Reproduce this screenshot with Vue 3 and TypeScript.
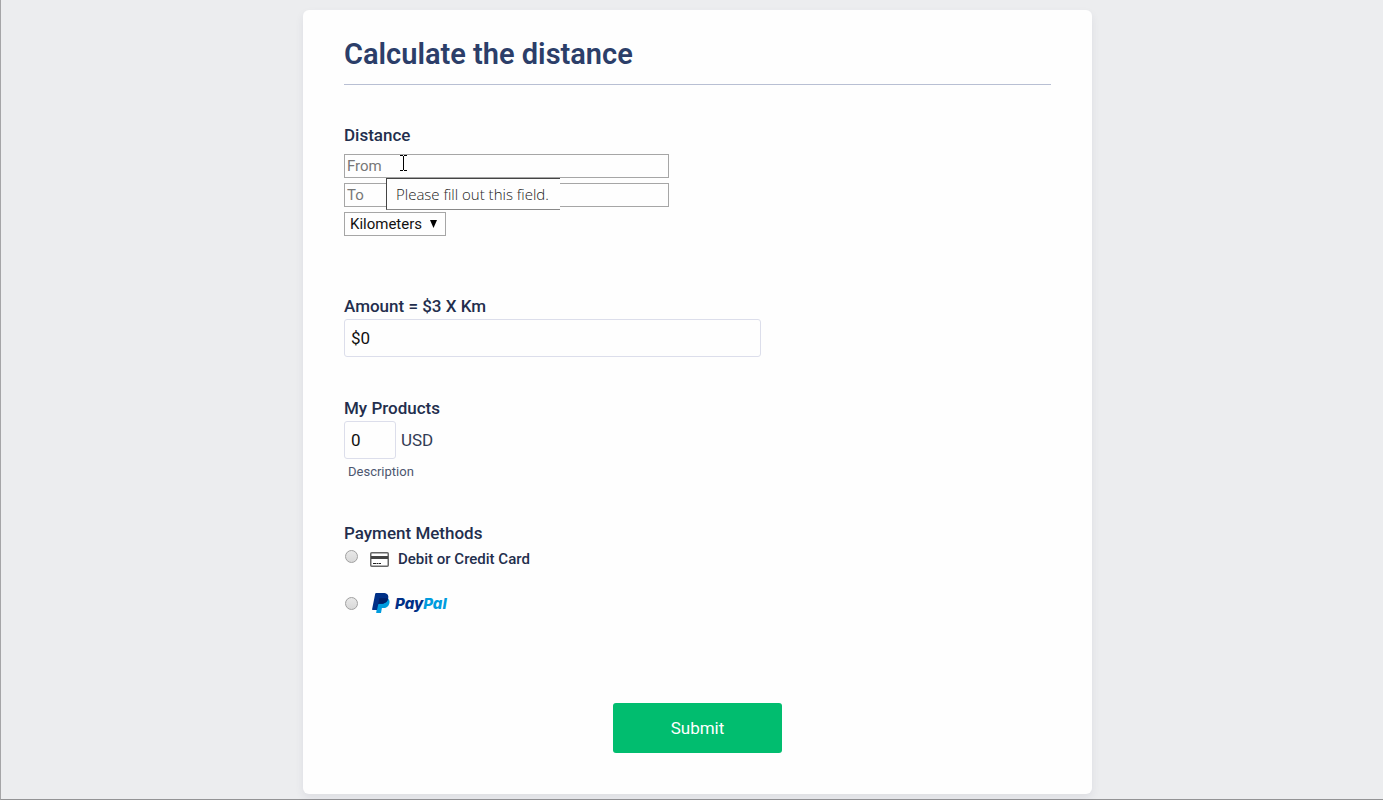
<script setup lang="ts">
import { ref } from 'vue'

const from = ref('')
const to = ref('')
const unit = ref('Kilometers')
const amount = ref('$0')
const price = ref('0')
const method = ref('')
</script>

<template>
  <main class="page">
    <form class="card" @submit.prevent>
      <header class="header">
        <h1>Calculate the distance</h1>
      </header>

      <fieldset class="group distance">
        <legend class="label">Distance</legend>
        <div class="field">
          <input v-model="from" class="plain" type="text" placeholder="From" aria-label="From" />
          <svg class="cursor" width="7" height="16" viewBox="0 0 7 16" aria-hidden="true">
            <path d="M0 .5h3M4 .5h3M3.5 1v14M0 15.5h3M4 15.5h3" fill="none" stroke="#000" />
          </svg>
          <div class="tooltip" role="tooltip">Please fill out this field.</div>
        </div>
        <div class="field">
          <input v-model="to" class="plain" type="text" placeholder="To" aria-label="To" />
        </div>
        <div class="unit">
          <select v-model="unit" aria-label="Unit">
            <option>Kilometers</option>
            <option>Miles</option>
          </select>
          <svg class="arrow" width="7" height="8" viewBox="0 0 7 8" aria-hidden="true">
            <path d="M0 0h7L3.5 8z" fill="#000" />
          </svg>
        </div>
      </fieldset>

      <div class="group amount">
        <label class="label" for="amount">Amount = $3 X Km</label>
        <input id="amount" v-model="amount" class="box" type="text" />
      </div>

      <div class="group products">
        <label class="label" for="price">My Products</label>
        <div class="price">
          <input id="price" v-model="price" class="box small" type="text" />
          <span>USD</span>
        </div>
        <div class="description">Description</div>
      </div>

      <fieldset class="group payment">
        <legend class="label">Payment Methods</legend>
        <label class="method">
          <input v-model="method" class="raised" type="radio" name="method" value="card" />
          <svg class="card-icon" width="19" height="15" viewBox="0 0 19 15" aria-hidden="true">
            <rect x=".75" y=".75" width="17.5" height="13.5" rx="1" fill="#fff" stroke="#666" stroke-width="1.5" />
            <path d="M1 4h17v3H1z" fill="#444" />
            <path d="M3 11.5h3.5M7 11.5h1.5M9 11.5h2" stroke="#222" />
          </svg>
          <span class="card-name">Debit or Credit Card</span>
        </label>
        <label class="method">
          <input v-model="method" type="radio" name="method" value="paypal" />
          <svg class="paypal-icon" width="18" height="20" viewBox="0 0 18 20" aria-hidden="true">
            <path d="M6 5h9.3c2 1.2 2.6 3 2.1 5.2-.8 3.5-3.2 4.9-6.6 4.9h-.9L9 20H4.2z" fill="#009cde" />
            <path d="M3.2.8Q3.3 0 4.1 0h7c3.6 0 5.9 1.7 5.1 5.2-.8 4-3.4 5.5-7.1 5.5H7.2q-.8 0-1 .9L5 17H.6q-.6 0-.5-.7z" fill="#003087" />
            <path d="M7.3 5.2h7.5l1.3.5c-1 3.6-3.6 5-7 5H7.2q-.8 0-1 .9z" fill="#012169" />
          </svg>
          <span class="paypal-name">Pay<span>Pal</span></span>
        </label>
      </fieldset>

      <button class="submit" type="submit">Submit</button>
    </form>
  </main>
</template>

<style>
body {
  background: #ecedef;
}
</style>

<style scoped>
.page {
  box-sizing: border-box;
  min-height: 100vh;
  padding: 10px 0 5px 11px;
  border-left: 1px solid #a5a5a7;
  border-bottom: 1px solid #939395;
  font-family: Roboto, "Liberation Sans", sans-serif;
  color: #2c3345;
}

.card {
  box-sizing: border-box;
  display: flex;
  flex-direction: column;
  max-width: 789px;
  margin: 0 auto;
  padding: 0 41px 41px;
  border-radius: 6px;
  background: #fefefe;
  box-shadow: 0 4px 9px rgba(45, 55, 90, 0.08);
}

.header {
  padding: 24px 0 10px;
  border-bottom: 1px solid #b8bfd3;
}

h1 {
  margin: 0;
  font-size: 29px;
  line-height: 40px;
  font-weight: 600;
  color: #2c3e69;
}

.group {
  display: flex;
  flex-direction: column;
  align-items: flex-start;
  min-width: 0;
  margin: 40px 0 0;
  padding: 0;
  border: 0;
}

.label {
  padding: 0;
  font-size: 17px;
  line-height: 20px;
  font-weight: 500;
  color: #232e4d;
}

.distance {
  gap: 5px;
}

.distance .label {
  margin-bottom: 9px;
}

.field,
.unit {
  position: relative;
}

.field {
  width: 46%;
}

.plain,
select {
  box-sizing: border-box;
  display: block;
  height: 24px;
  margin: 0;
  border: 1px solid #a6a6a6;
  border-radius: 0;
  background: #fefefe;
  font-family: Roboto, "Liberation Sans", sans-serif;
  font-size: 15px;
  color: #111;
}

.plain {
  width: 100%;
  padding: 0 2px;
}

.plain::placeholder {
  color: #777;
}

select {
  appearance: none;
  width: 102px;
  padding: 0 20px 0 5px;
}

.arrow {
  position: absolute;
  top: 8px;
  right: 9px;
  pointer-events: none;
}

.cursor {
  position: absolute;
  top: 1px;
  left: 56px;
}

.tooltip {
  position: absolute;
  z-index: 1;
  top: 24px;
  left: 42px;
  box-sizing: border-box;
  width: 174px;
  height: 32px;
  padding-left: 9px;
  border: solid #444;
  border-width: 1px 0 1px 1px;
  border-bottom-color: #888;
  background: #fefefe;
  font-family: "Open Sans", "Noto Sans", sans-serif;
  font-size: 15px;
  font-weight: 300;
  line-height: 30px;
  white-space: nowrap;
  color: #222;
}

.amount {
  margin-top: 60px;
}

.box {
  box-sizing: border-box;
  width: 59%;
  height: 38px;
  margin: 3px 0 0;
  padding: 0 6px;
  border: 1px solid #dcdeeb;
  border-radius: 3px;
  background: #fefefe;
  font-family: Roboto, "Liberation Sans", sans-serif;
  font-size: 17px;
  color: #111;
}

.products {
  margin-top: 41px;
}

.price {
  display: flex;
  align-items: center;
  gap: 5px;
  margin-top: 3px;
  font-size: 17px;
  line-height: 20px;
  color: #333c55;
}

.price .small {
  width: 52px;
  margin: 0;
}

.description {
  padding: 5px 4px 0;
  font-size: 13px;
  line-height: 16px;
  color: #4c566f;
}

.payment {
  margin-top: 43px;
  gap: 20px;
}

.payment .label {
  margin-bottom: 4px;
}

.method {
  display: flex;
  align-items: center;
  height: 24px;
}

.method input {
  appearance: none;
  box-sizing: border-box;
  width: 13px;
  height: 13px;
  margin: 0 14px 0 1px;
  border: 1px solid #a0a0a0;
  border-radius: 50%;
  background: linear-gradient(#e8e8e8, #d8d8d8);
}

.method input:checked {
  background: radial-gradient(#444 0 3px, #e0e0e0 4px);
}

.method .raised {
  margin-bottom: 5px;
  margin-right: 12px;
}

.card-name {
  margin-left: 9px;
  font-size: 15px;
  font-weight: 500;
  color: #232e4d;
}

.paypal-name {
  margin-left: 5px;
  font-family: Inter, "Open Sans", sans-serif;
  font-size: 15px;
  font-style: italic;
  font-weight: 800;
  color: #003087;
}

.paypal-name span {
  color: #009cde;
}

.submit {
  align-self: center;
  width: 169px;
  height: 50px;
  margin-top: 88px;
  border: 0;
  border-radius: 3px;
  background: #01bd6f;
  font-family: Roboto, "Liberation Sans", sans-serif;
  font-size: 17px;
  color: #fff;
}
</style>
